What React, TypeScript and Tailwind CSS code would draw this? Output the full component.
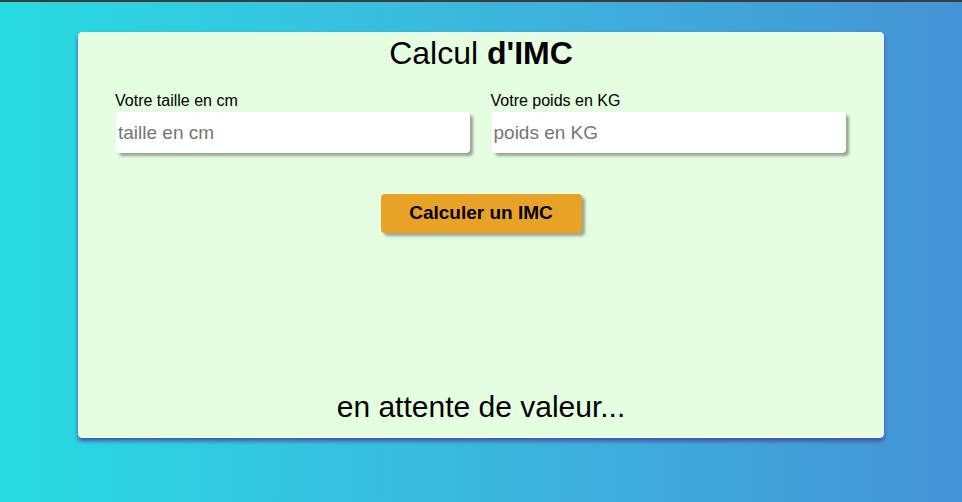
import React from 'react'

export default function App() {
  return (
    <div className="h-[502px] overflow-hidden border-t-2 border-[#3c3c3c] bg-linear-to-r from-[#26dbe3] to-[#4493d6] font-['Liberation_Sans',Arial,sans-serif] text-black">
      <div className="mx-auto mt-[30px] flex h-[406px] w-[806px] flex-col rounded-[4px] border border-[#f2fff0] bg-[#e5fde0] shadow-[0_3px_4px_rgba(70,60,150,0.85)]">
        {/* Title */}
        <h1 className="pt-[2px] text-center text-[32px] leading-[37px]">
          Calcul <span className="font-bold">d'IMC</span>
        </h1>

        {/* Inputs */}
        <div className="mt-[20px] grid grid-cols-2 pl-[36px] pr-[17px]">
          <div className="flex flex-col">
            <label className="text-[16px] leading-[18px]">Votre taille en cm</label>
            <input
              type="text"
              placeholder="taille en cm"
              className="ml-px mt-[2px] h-[41px] w-[354px] rounded-[4px] bg-white px-[2px] text-[19px] shadow-[3px_3px_3px_rgba(0,0,0,0.35)] outline-none placeholder:text-[#757575]"
            />
          </div>
          <div className="flex flex-col">
            <label className="text-[16px] leading-[18px]">Votre poids en KG</label>
            <input
              type="text"
              placeholder="poids en KG"
              className="ml-px mt-[2px] h-[41px] w-[354px] rounded-[4px] bg-white px-[2px] text-[19px] shadow-[3px_3px_3px_rgba(0,0,0,0.35)] outline-none placeholder:text-[#757575]"
            />
          </div>
        </div>

        {/* Button */}
        <div className="mt-[41px] flex justify-center">
          <button className="h-[39px] w-[201px] rounded-[4px] bg-[#e8a326] text-[19px] font-bold shadow-[3px_3px_3px_rgba(0,0,0,0.35)]">
            Calculer un IMC
          </button>
        </div>

        {/* Result */}
        <p className="mt-auto pb-[13px] text-center text-[30px] leading-[35px]">en attente de valeur...</p>
      </div>
    </div>
  )
}
